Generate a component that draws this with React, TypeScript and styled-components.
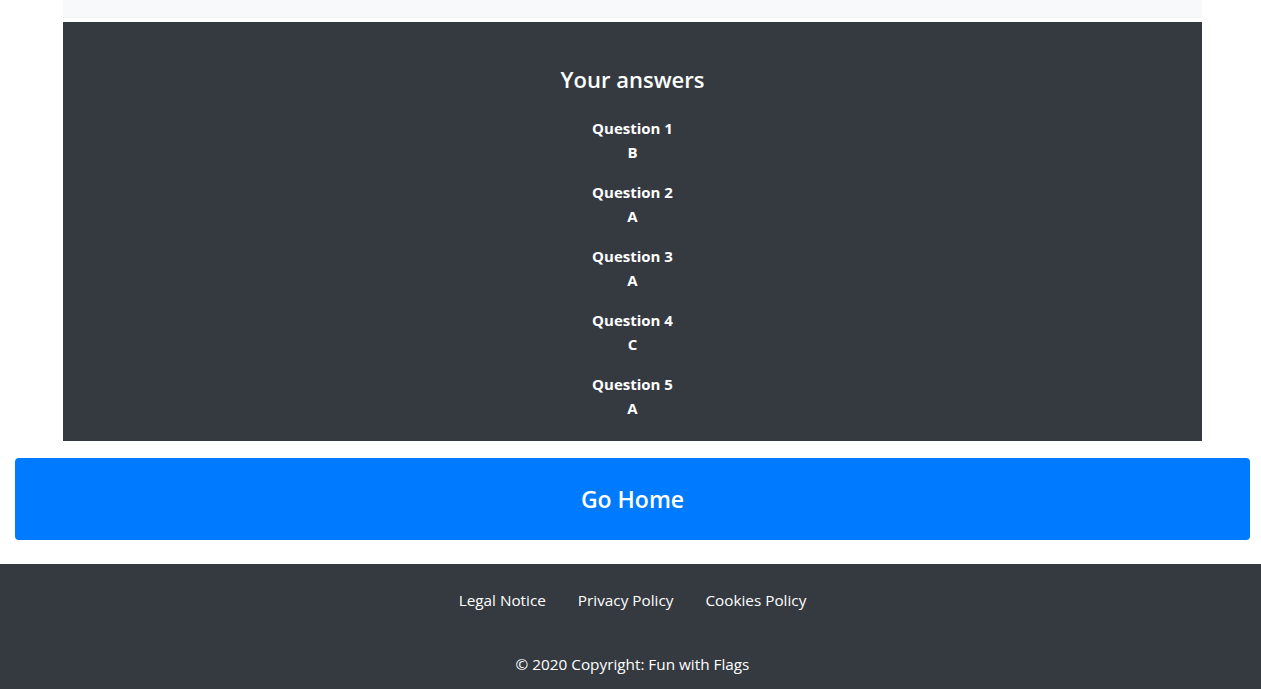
import React from "react";
import styled, { createGlobalStyle } from "styled-components";

const Global = createGlobalStyle`
  html, body { margin: 0; padding: 0; background: #fff; }
  body { font-family: "Open Sans", "Noto Sans", sans-serif; color: #212529; }
`;

const Page = styled.div`
  display: flex;
  flex-direction: column;
  min-height: 689px;
`;

const Container = styled.div`
  width: 1139px;
  margin-left: 63px;
  display: flex;
  flex-direction: column;
`;

const TopStrip = styled.div`
  height: 17px;
  background: #f8f9fa;
  border-bottom: 1px solid #eef1f6;
  margin-bottom: 4px;
`;

const AnswersPanel = styled.section`
  background: #343a40;
  color: #fff;
  padding: 43px 0 5px;
  display: flex;
  flex-direction: column;
  align-items: center;
  text-align: center;
`;

const Heading = styled.h4`
  margin: 0 0 22px;
  font-size: 22px;
  font-weight: 600;
  line-height: 29px;
`;

const AnswerGroup = styled.div`
  margin-bottom: 16px;
  font-size: 15px;
  font-weight: 700;
  line-height: 24px;
  display: flex;
  flex-direction: column;
`;

const ButtonRow = styled.div`
  padding: 17px 11px 24px 15px;
`;

const HomeButton = styled.button`
  width: 100%;
  height: 82px;
  border: none;
  border-radius: 4px;
  background: #007bff;
  color: #fff;
  font-family: inherit;
  font-size: 23px;
  font-weight: 600;
  cursor: pointer;
`;

const Footer = styled.footer`
  background: #343a40;
  color: #fff;
  flex: 1;
  display: flex;
  flex-direction: column;
  align-items: center;
  padding-top: 24px;
  font-size: 15.3px;
  line-height: 24px;
`;

const LinkRow = styled.nav`
  display: flex;
  gap: 32px;
  padding-left: 4px;
`;

const FooterLink = styled.a`
  color: #fff;
  text-decoration: none;
`;

const Copyright = styled.div`
  margin-top: 40px;
  padding-left: 4px;
`;

const answers = [
  ["Question 1", "B"],
  ["Question 2", "A"],
  ["Question 3", "A"],
  ["Question 4", "C"],
  ["Question 5", "A"],
];

export default function App() {
  return (
    <Page>
      <Global />
      <Container>
        <TopStrip />
        <AnswersPanel>
          <Heading>Your answers</Heading>
          {answers.map(([q, a]) => (
            <AnswerGroup key={q}>
              <span>{q}</span>
              <span>{a}</span>
            </AnswerGroup>
          ))}
        </AnswersPanel>
      </Container>
      <ButtonRow>
        <HomeButton>Go Home</HomeButton>
      </ButtonRow>
      <Footer>
        <LinkRow>
          <FooterLink href="#">Legal Notice</FooterLink>
          <FooterLink href="#">Privacy Policy</FooterLink>
          <FooterLink href="#">Cookies Policy</FooterLink>
        </LinkRow>
        <Copyright>© 2020 Copyright: Fun with Flags</Copyright>
      </Footer>
    </Page>
  );
}
